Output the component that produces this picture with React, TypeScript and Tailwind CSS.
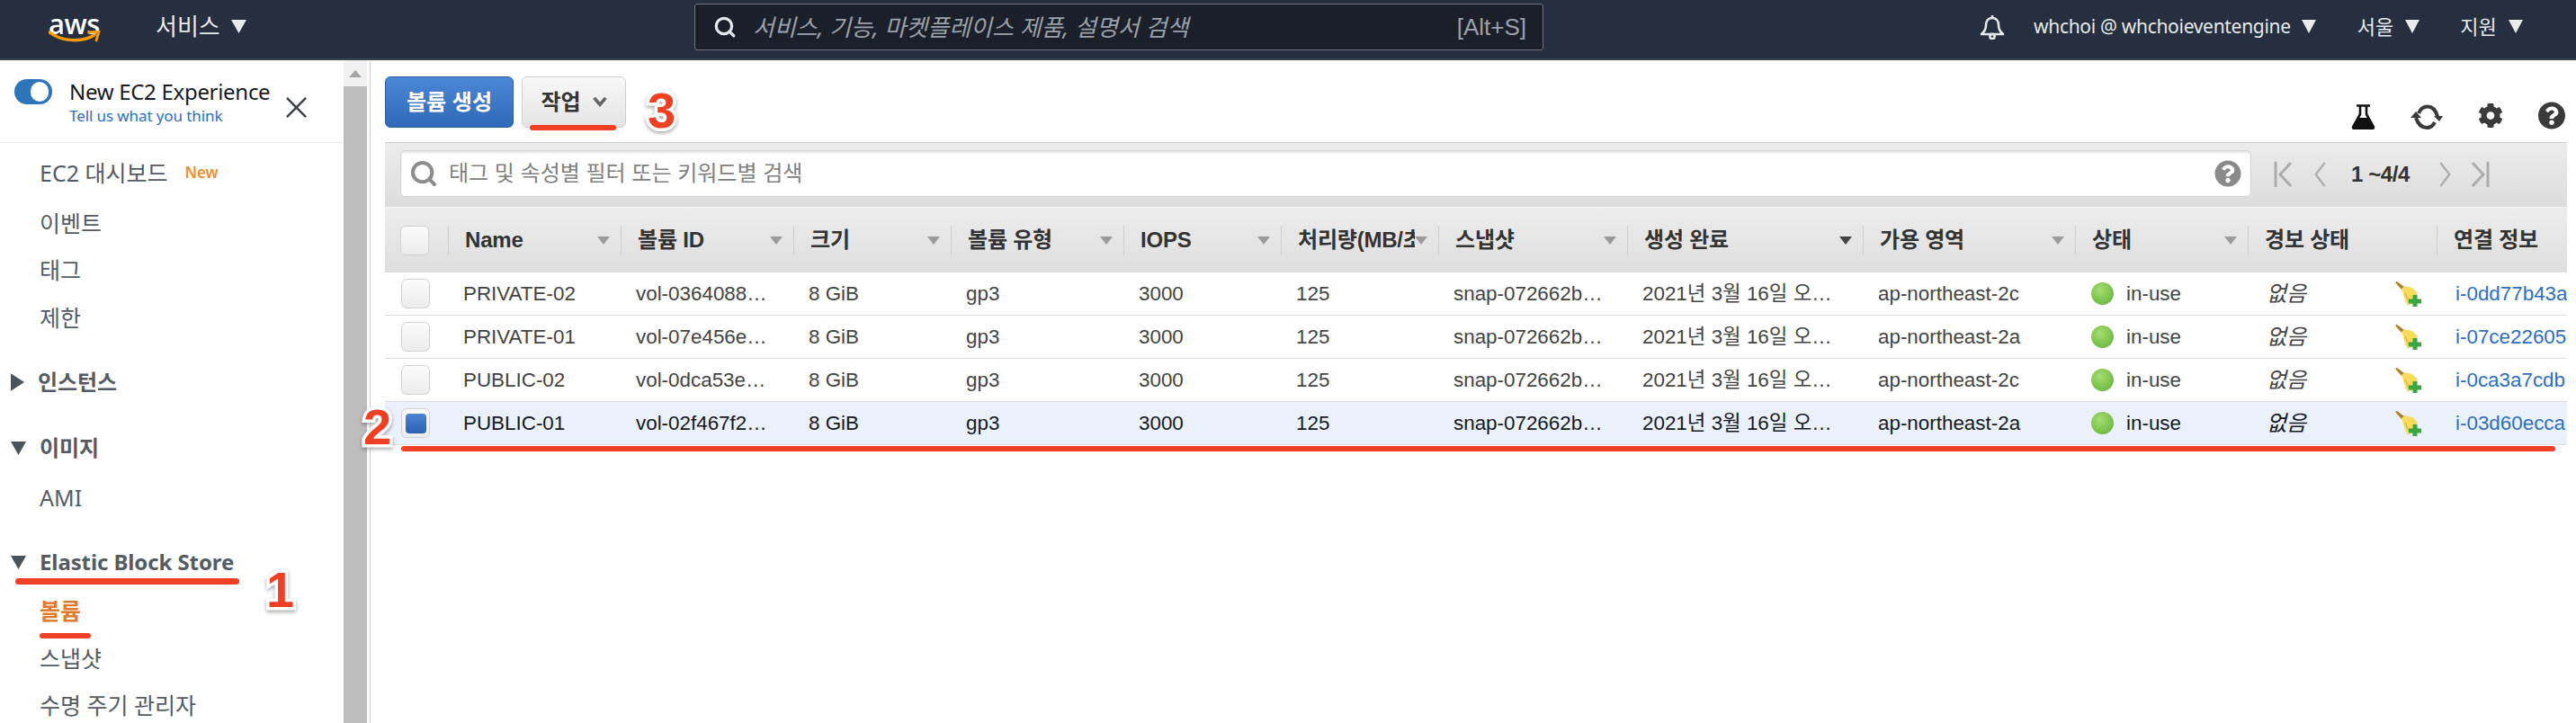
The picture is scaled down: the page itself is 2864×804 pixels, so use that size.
import { Search } from 'lucide-react';
import { FaCog, FaQuestionCircle } from 'react-icons/fa';

const SANS = "font-['Liberation_Sans','Noto_Sans_CJK_KR',sans-serif]";
const NAV = "font-['Noto_Sans','Noto_Sans_CJK_KR',sans-serif]";
const COLS =
  'grid grid-cols-[70px_192px_192px_175px_192px_175px_175px_210px_262px_236px_192px_210px_145px]';

const HEADERS = [
  { label: 'Name', sort: true },
  { label: '볼륨 ID', sort: true },
  { label: '크기', sort: true },
  { label: '볼륨 유형', sort: true },
  { label: 'IOPS', sort: true },
  { label: '처리량(MB/초)', sort: true },
  { label: '스냅샷', sort: true },
  { label: '생성 완료', sort: true, active: true },
  { label: '가용 영역', sort: true },
  { label: '상태', sort: true },
  { label: '경보 상태', sort: false },
  { label: '연결 정보', sort: false },
];

const ROWS = [
  { name: 'PRIVATE-02', id: 'vol-0364088…', az: 'ap-northeast-2c', link: 'i-0dd77b43a' },
  { name: 'PRIVATE-01', id: 'vol-07e456e…', az: 'ap-northeast-2a', link: 'i-07ce22605' },
  { name: 'PUBLIC-02', id: 'vol-0dca53e…', az: 'ap-northeast-2c', link: 'i-0ca3a7cdb' },
  { name: 'PUBLIC-01', id: 'vol-02f467f2…', az: 'ap-northeast-2a', link: 'i-03d60ecca', selected: true },
];

function Caret({ className = '' }: { className?: string }) {
  return (
    <svg viewBox="0 0 16 14" className={className} fill="currentColor" preserveAspectRatio="none">
      <path d="M0 0h16L8 14z" />
    </svg>
  );
}

function AwsLogo() {
  return (
    <div className="relative h-[36px] w-[58px]">
      <span className="absolute left-0 top-[-7px] font-['Open_Sans',sans-serif] text-[31px] font-semibold leading-[40px] tracking-[-0.5px] text-white">
        aws
      </span>
      <svg viewBox="0 0 58 14" className="absolute left-0 top-[21px] h-[14px] w-[58px]" fill="none">
        <path d="M1 2c15 11 37 11 50 3" stroke="#f90" strokeWidth="3.4" strokeLinecap="round" />
        <path d="M45 2l11-1-3 10" stroke="#f90" strokeWidth="2.8" strokeLinejoin="round" strokeLinecap="round" />
      </svg>
    </div>
  );
}

function BellIcon() {
  return (
    <svg viewBox="0 0 28 28" className="ml-[485px] mt-[16px] h-[28px] w-[28px]" fill="none" stroke="#e5e7e9" strokeWidth="2.6">
      <path d="M14 1v3M14 4c-5 0-7 4-7 8 0 5-2 7-5 10h24c-3-3-5-5-5-10 0-4-2-8-7-8z" strokeLinejoin="round" />
      <circle cx="14" cy="24.5" r="2.6" />
    </svg>
  );
}

function TopBar() {
  return (
    <header className={`flex h-[67px] items-start border-b-2 border-[#3a4350] bg-[#252f3f] text-[#e8eaec] ${NAV}`}>
      <div className="ml-[54px] mt-[13px]">
        <AwsLogo />
      </div>
      <div className="ml-[61px] mt-[10px] flex w-[158px] items-center gap-[12px] text-[26px] leading-[38px]">
        서비스 <Caret className="h-[15px] w-[17px]" />
      </div>
      <div className="ml-[441px] mt-[4px] flex h-[52px] w-[944px] items-center rounded-[3px] border border-[#6b727c] bg-[#1b1f2a] pl-[20px] pr-[18px]">
        <Search className="h-[26px] w-[26px] text-[#e5e7e9]" strokeWidth={3} />
        <span className="ml-[18px] flex-1 text-[26px] italic leading-[38px] text-[#9aa0a8]">서비스, 기능, 마켓플레이스 제품, 설명서 검색</span>
        <span className={`text-[26px] text-[#9aa0a8] ${SANS}`}>[Alt+S]</span>
      </div>
      <BellIcon />
      <div className="ml-[32px] mt-[10px] flex items-center gap-[12px] text-[21px] leading-[38px] tracking-[-0.3px]">
        whchoi @ whchoieventengine <Caret className="h-[15px] w-[16px]" />
      </div>
      <div className="ml-[46px] mt-[10px] flex items-center gap-[13px] text-[22px] leading-[38px]">
        서울 <Caret className="h-[15px] w-[16px]" />
      </div>
      <div className="ml-[45px] mt-[10px] flex items-center gap-[13px] text-[22px] leading-[38px]">
        지원 <Caret className="h-[15px] w-[16px]" />
      </div>
    </header>
  );
}

function NavItem({ children, top }: { children: React.ReactNode; top: string }) {
  return <div className={`pl-[44px] text-[25px] leading-[36px] text-[#545b64] ${top}`}>{children}</div>;
}

function NavGroup({ label, open, top }: { label: string; open: boolean; top: string }) {
  return (
    <div className={`flex items-center pl-[12px] text-[24px] font-bold leading-[36px] tracking-[-0.1px] text-[#545b64] ${top}`}>
      {open ? (
        <Caret className="h-[15px] w-[17px] text-[#4a525c]" />
      ) : (
        <svg viewBox="0 0 14 18" className="h-[20px] w-[15px] text-[#4a525c]" fill="currentColor">
          <path d="M0 0l14 9-14 9z" />
        </svg>
      )}
      <span className="ml-[15px]">{label}</span>
    </div>
  );
}

function Sidebar() {
  return (
    <aside className={`h-full w-[381px] shrink-0 bg-white ${NAV}`}>
      <div className="flex h-[92px] border-b border-[#e6e6e6] pl-[16px]">
        <div className="relative mt-[21px] h-[28px] w-[42px] rounded-full bg-[#2e74b8]">
          <div className="absolute right-[4px] top-[3px] h-[22px] w-[20px] rounded-full bg-white" />
        </div>
        <div className="ml-[19px] mt-[20px]">
          <div className="text-[24px] leading-[30px] tracking-[-0.3px] text-[#16191f]">New EC2 Experience</div>
          <div className="text-[17px] leading-[24px] tracking-[-0.1px] text-[#2f6fc4]">Tell us what you think</div>
        </div>
        <svg viewBox="0 0 24 24" className="ml-[18px] mt-[41px] h-[23px] w-[23px]" stroke="#3b4148" strokeWidth="2.6" fill="none">
          <path d="M1 1l22 22M23 1L1 23" />
        </svg>
      </div>
      <NavItem top="mt-[15px]">
        <span className="flex items-center">
          EC2 대시보드
          <span className="ml-[19px] text-[17px] font-semibold text-[#ec8f2f]">New</span>
        </span>
      </NavItem>
      <NavItem top="mt-[20px]">이벤트</NavItem>
      <NavItem top="mt-[16px]">태그</NavItem>
      <NavItem top="mt-[17px]">제한</NavItem>
      <NavGroup label="인스턴스" open={false} top="mt-[36px]" />
      <NavGroup label="이미지" open top="mt-[37px]" />
      <NavItem top="mt-[19px]">AMI</NavItem>
      <NavGroup label="Elastic Block Store" open top="mt-[36px]" />
      <div className="mt-[18px] pl-[44px] text-[25px] font-bold leading-[36px] text-[#e07b2e]">볼륨</div>
      <NavItem top="mt-[17px]">스냅샷</NavItem>
      <NavItem top="mt-[16px]">수명 주기 관리자</NavItem>
    </aside>
  );
}

function Scrollbar() {
  return (
    <div className="flex h-full w-[31px] shrink-0 border-r border-[#d0d0d0]">
      <div className="ml-[1px] flex w-[26px] flex-col bg-[#f1f1f1]">
        <div className="flex h-[29px] items-center justify-center">
          <svg viewBox="0 0 14 8" className="h-[8px] w-[14px]" fill="#a6a6a6">
            <path d="M7 0l7 8H0z" />
          </svg>
        </div>
        <div className="flex-1 bg-[#bdbdbd]" />
      </div>
    </div>
  );
}

function Flask() {
  return (
    <svg viewBox="0 0 27 28" className="h-[28px] w-[27px]">
      <path d="M6 1.5h15M10 2v9L2 25.5h23L17 11V2" fill="none" stroke="#111" strokeWidth="2.6" strokeLinejoin="round" />
      <path d="M7.5 15h12l6.5 11.5q0 1.5-2 1.5H3q-2 0-2-1.5z" fill="#111" />
    </svg>
  );
}

function Refresh() {
  return (
    <svg viewBox="0 0 36 28" className="h-[28px] w-[36px]" fill="none" stroke="#3a3a3a" strokeWidth="4">
      <path d="M9 10C11 5 15 2.5 19 2.5c5 0 9 4 11 11" />
      <path d="M27 20c-2 4-5 6-9 6-6 0-10-5-12-11" />
      <path d="M26 13h10l-4 6z" fill="#3a3a3a" stroke="none" />
      <path d="M0 15h12L6 8z" fill="#3a3a3a" stroke="none" />
    </svg>
  );
}

function ActionBar() {
  return (
    <div className="flex h-[91px] items-start">
      <button
        type="button"
        className={`mt-[18px] h-[57px] w-[143px] rounded-[6px] border border-[#2c5da3] bg-linear-to-b from-[#4b88d6] to-[#2f69b8] text-[24px] font-bold text-white ${SANS}`}
      >
        볼륨 생성
      </button>
      <button
        type="button"
        className={`ml-[9px] mt-[18px] flex h-[57px] w-[116px] items-center justify-center gap-[13px] rounded-[6px] border border-[#cfcfcf] bg-linear-to-b from-[#f8f8f8] to-[#e4e4e4] text-[24px] font-bold text-[#333] ${SANS}`}
      >
        작업
        <svg viewBox="0 0 16 12" className="h-[11px] w-[16px]" fill="none" stroke="#666" strokeWidth="4">
          <path d="M1 1l7 8 7-8" />
        </svg>
      </button>
      <div className="ml-auto mt-[46px] flex items-center pr-[1px]">
        <Flask />
        <span className="ml-[39px]">
          <Refresh />
        </span>
        <FaCog className="ml-[39px] mb-[3px] h-[29px] w-[28px] text-[#3a3a3a]" />
        <FaQuestionCircle className="ml-[38px] mb-[3px] h-[31px] w-[32px] text-[#3a3a3a]" />
      </div>
    </div>
  );
}

function Chevron({ bar, flip }: { bar?: boolean; flip?: boolean }) {
  return (
    <svg viewBox="0 0 20 30" className={`h-[30px] ${bar ? 'w-[20px]' : 'w-[14px]'}`} fill="none" stroke="#adadad" strokeWidth="3" preserveAspectRatio="none">
      {flip ? (
        <>
          <path d={bar ? 'M1 2l12 13L1 28' : 'M2 2l14 13L2 28'} />
          {bar && <path d="M18 1v28" />}
        </>
      ) : (
        <>
          {bar && <path d="M2 1v28" />}
          <path d={bar ? 'M19 2L7 15l12 13' : 'M18 2L4 15l14 13'} />
        </>
      )}
    </svg>
  );
}

function FilterBar() {
  return (
    <div className={`flex h-[72px] items-start border-t border-[#cfcfcf] bg-linear-to-b from-[#ececec] to-[#dcdcdc] ${SANS}`}>
      <div className="ml-[17px] mt-[8px] flex h-[52px] w-[2058px] items-center rounded-[5px] border border-[#d4d4d4] bg-white pl-[9px] shadow-[inset_0_2px_3px_#e4e4e4]">
        <Search className="h-[32px] w-[32px] text-[#8d8d8d]" strokeWidth={3} />
        <span className="ml-[12px] flex-1 text-[24px] text-[#808080]">태그 및 속성별 필터 또는 키워드별 검색</span>
        <FaQuestionCircle className="mr-[10px] h-[30px] w-[30px] text-[#8a8a8a]" />
      </div>
      <div className="ml-[25px] mt-[20px] flex items-center">
        <Chevron bar />
        <span className="ml-[24px]">
          <Chevron />
        </span>
        <span className="ml-[28px] w-[70px] whitespace-nowrap text-[24px] font-bold leading-[30px] tracking-[-0.4px] text-[#333]">1 ~4/4</span>
        <span className="ml-[28px]">
          <Chevron flip />
        </span>
        <span className="ml-[22px]">
          <Chevron bar flip />
        </span>
      </div>
    </div>
  );
}

function CheckBox({ checked = false }: { checked?: boolean }) {
  return (
    <div className="flex h-[33px] w-[32px] items-center justify-center rounded-[6px] border border-[#d2d2d2] bg-linear-to-b from-[#fafafa] to-[#ececec]">
      {checked && <div className="h-[22px] w-[23px] rounded-[4px] bg-linear-to-b from-[#4c86d3] to-[#2a62b2]" />}
    </div>
  );
}

function Broom() {
  return (
    <svg viewBox="0 0 29 28" className="h-[28px] w-[29px]">
      <path d="M0 1l2-1 8 6-3 3z" fill="#a8802c" />
      <path d="M7 8l4-3 8 2 6 6-3 9-8 5-3-6z" fill="#f7dc5c" />
      <path d="M11 13l5 11" fill="none" stroke="#d9b238" strokeWidth="1.2" />
      <path d="M19.5 15h5v4.5h4.5v5h-4.5V28h-5v-3.5H15v-5h4.5z" fill="#3aa63f" />
    </svg>
  );
}

function TableHeader() {
  return (
    <div className={`${COLS} h-[73px] border-t border-[#f4f4f4] bg-linear-to-b from-[#ededed] to-[#dedede] ${SANS}`}>
      <div className="flex pl-[17px] pt-[20px]">
        <CheckBox />
      </div>
      {HEADERS.map((h) => (
        <div key={h.label} className="mt-[20px] flex h-[33px] items-center border-l border-[#cfcfcf] pl-[18px] pr-[12px]">
          <span className="-mt-[3px] min-w-0 flex-1 overflow-hidden whitespace-nowrap text-[24px] font-bold leading-[33px] tracking-[-0.2px] text-[#333]">
            {h.label}
          </span>
          {h.sort && <Caret className={`h-[9px] w-[14px] shrink-0 ${h.active ? 'text-[#444]' : 'text-[#9b9b9b]'}`} />}
        </div>
      ))}
    </div>
  );
}

function Row({ row }: { row: (typeof ROWS)[number] }) {
  const tone = row.selected ? 'text-[#16191f]' : 'text-[#444]';
  const cell = 'overflow-hidden whitespace-nowrap pl-[17px]';
  return (
    <div
      className={`${COLS} h-[48px] items-center border-b border-[#dcdcdc] text-[22.4px] ${tone} ${
        row.selected ? 'bg-[#eaf1fb]' : 'bg-white'
      } ${SANS}`}
    >
      <div className="pl-[18px]">
        <CheckBox checked={row.selected} />
      </div>
      <div className={cell}>{row.name}</div>
      <div className={cell}>{row.id}</div>
      <div className={cell}>8 GiB</div>
      <div className={cell}>gp3</div>
      <div className={cell}>3000</div>
      <div className={cell}>125</div>
      <div className={cell}>snap-072662b…</div>
      <div className={cell}>2021년 3월 16일 오…</div>
      <div className={cell}>{row.az}</div>
      <div className="flex items-center pl-[18px]">
        <span className="h-[25px] w-[25px] rounded-full bg-[radial-gradient(circle_at_40%_35%,#a6dc70,#5cb034)]" />
        <span className="ml-[14px]">in-use</span>
      </div>
      <div className="flex items-center pl-[21px] pr-[17px]">
        <span className="flex-1 text-[24px] italic">없음</span>
        <Broom />
      </div>
      <div className={`${cell} pl-[21px] text-[#2d6fc0]`}>{row.link}</div>
    </div>
  );
}

function Marker({ className }: { className: string }) {
  return <div className={`absolute rounded-full bg-[#ef4023] ${className}`} />;
}

function Digit({ children, className }: { children: string; className: string }) {
  return (
    <div
      className={`absolute font-['Liberation_Sans',sans-serif] text-[56px] font-bold leading-none text-[#ef4023] [-webkit-text-stroke:7px_white] [paint-order:stroke_fill] drop-shadow-[0_2px_2px_rgba(0,0,0,0.35)] ${className}`}
    >
      {children}
    </div>
  );
}

export default function App() {
  return (
    <div className="relative h-[804px] w-[2864px] overflow-hidden bg-white">
      <TopBar />
      <div className="flex h-[737px]">
        <Sidebar />
        <Scrollbar />
        <main className="min-w-0 flex-1 pl-[16px] pr-[10px]">
          <ActionBar />
          <FilterBar />
          <TableHeader />
          {ROWS.map((row) => (
            <Row key={row.name} row={row} />
          ))}
        </main>
      </div>

      {/* hand-drawn annotations on top of the screenshot */}
      <Marker className="left-[589px] top-[139px] h-[6px] w-[96px]" />
      <Marker className="left-[446px] top-[496px] h-[6px] w-[2395px]" />
      <Marker className="left-[17px] top-[643px] h-[7px] w-[249px]" />
      <Marker className="left-[44px] top-[704px] h-[6px] w-[57px]" />
      <Digit className="left-[720px] top-[95px]">3</Digit>
      <Digit className="left-[404px] top-[447px]">2</Digit>
      <Digit className="left-[296px] top-[628px]">1</Digit>
    </div>
  );
}
